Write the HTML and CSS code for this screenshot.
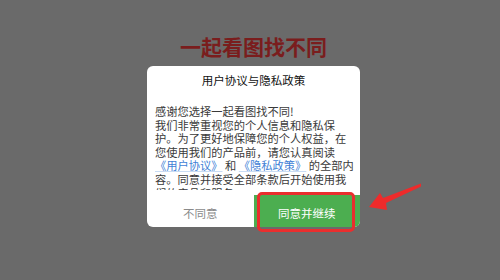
FILE: index.html
```html
<!DOCTYPE html>
<html lang="zh-CN">
<head>
<meta charset="utf-8">
<title>一起看图找不同</title>
<link rel="stylesheet" href="styles.css">
</head>
<body>
<div class="page">
  <h1 class="game-title">一起看图找不同</h1>
  <div class="dialog">
    <div class="dialog-title">用户协议与隐私政策</div>
    <div class="dialog-body">
      <p>感谢您选择一起看图找不同!<br>我们非常重视您的个人信息和隐私保护。为了更好地保障您的个人权益，在您使用我们的产品前，请您认真阅读<a class="link">《用户协议》</a> 和 <a class="link">《隐私政策》</a> 的全部内容。同意并接受全部条款后开始使用我们的产品和服务。</p>
    </div>
    <div class="dialog-actions">
      <div class="btn btn-cancel">不同意</div>
      <div class="btn btn-ok">同意并继续</div>
    </div>
  </div>
</div>
<div class="highlight-box"></div>
<svg class="pointer-arrow" width="60" height="34" viewBox="0 0 60 34">
  <polygon points="8,25 19,11 22,16 61,1 61,4 25,21 26,28" fill="#ee2b2b"/>
</svg>
</body>
</html>
```
FILE: styles.css
```css
html, body {
  margin: 0;
  padding: 0;
}
body {
  width: 500px;
  height: 280px;
  background: #6a6a6a;
  font-family: "Noto Sans CJK SC", "Noto Sans", sans-serif;
  overflow: hidden;
  position: relative;
}
.page {
  display: flex;
  flex-direction: column;
  align-items: center;
  padding: 34px 0 0 7px;
}
.game-title {
  margin: 0;
  font-size: 21px;
  line-height: 24px;
  font-weight: 700;
  color: #7a1d1d;
}
.dialog {
  margin-top: 8px;
  width: 213px;
  height: 161px;
  background: #ffffff;
  border-radius: 6px;
  overflow: hidden;
  display: flex;
  flex-direction: column;
}
.dialog-title {
  padding-top: 6px;
  text-align: center;
  font-size: 11.5px;
  line-height: 16px;
  color: #111;
}
.dialog-body {
  margin-top: 17px;
  height: 85px;
  overflow: hidden;
  padding: 0 4px 0 8px;
}
.dialog-body p {
  margin: 0;
  font-size: 11.25px;
  line-height: 13.6px;
  color: #3a3a3a;
}
.link {
  color: #3f7fd6;
  text-decoration: underline;
  text-decoration-color: #c9dcf3;
}
.dialog-actions {
  margin-top: 5px;
  flex: 1;
  display: flex;
}
.btn {
  flex: 1;
  display: flex;
  align-items: center;
  justify-content: center;
  font-size: 11.5px;
  padding-top: 3px;
}
.btn-cancel {
  color: #8a8a8a;
}
.btn-ok {
  background: #4cae50;
  color: #ffffff;
}
.highlight-box {
  position: absolute;
  left: 257px;
  top: 192px;
  width: 92px;
  height: 34px;
  border: 3px solid #ea2e2e;
  border-radius: 5px;
}
.pointer-arrow {
  position: absolute;
  left: 361px;
  top: 182px;
}
```
